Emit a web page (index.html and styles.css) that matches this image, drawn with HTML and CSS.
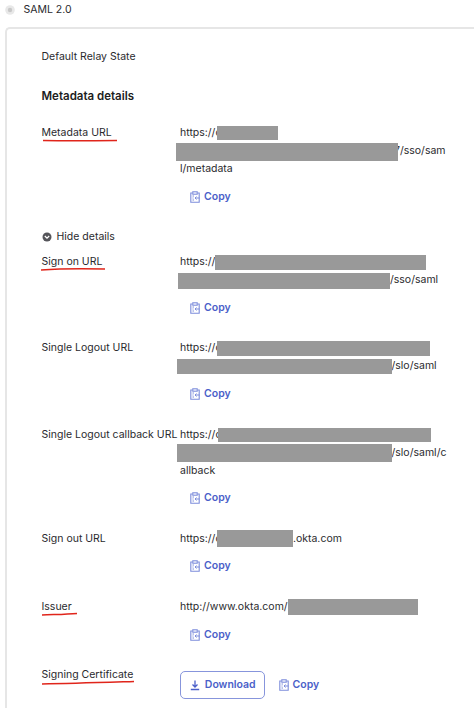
FILE: index.html
```html
<!DOCTYPE html>
<html lang="en">
<head>
<meta charset="utf-8">
<title>SAML 2.0</title>
<link rel="stylesheet" href="styles.css">
</head>
<body>
<svg class="defs" width="0" height="0" aria-hidden="true">
  <symbol id="clip" viewBox="0 0 10 12">
    <path d="M2.500 2H.8v9.200h8.400V2H7.500" fill="none" stroke="currentColor" stroke-width="1.100"/>
    <rect x="2.800" y=".8" width="4.400" height="2.400" fill="none" stroke="currentColor" stroke-width="1.100"/>
    <path d="M2.500 5h1.500M2.500 7h1M2.500 9h1.500M9.500 7H5M6.500 5.500 5 7l1.500 1.500" fill="none" stroke="currentColor" stroke-width="1"/>
  </symbol>
</svg>
<header class="method">
  <svg class="radio" width="10" height="10" viewBox="0 0 10 10"><circle cx="5" cy="5" r="4.800" fill="#e8e8e8"/><circle cx="5" cy="5" r="2.200" fill="#c8c8c8"/></svg>
  <span>SAML 2.0</span>
</header>
<main class="card">
  <p class="relay">Default Relay State</p>
  <h2 class="title">Metadata details</h2>

  <section class="row">
    <div class="label marked">Metadata URL
      <svg class="mark mark-meta" viewBox="0 0 76 4"><path d="M0 2.500 C25 3 50 2.800 75 2.500"/></svg>
    </div>
    <div class="value">
      <div class="line">https://c<span class="bar b-meta1"></span></div>
      <div class="line"><span class="bar b-meta2"></span><span class="peek">7/sso/sam</span></div>
      <div class="line">l/metadata</div>
      <button class="copy"><svg class="ico"><use href="#clip"/></svg>Copy</button>
    </div>
  </section>

  <div class="toggle">
    <svg class="chev" width="10" height="10" viewBox="0 0 10 10"><circle cx="5" cy="5" r="4.500" fill="#55555a"/><path d="M2.800 4 5 6.200 7.200 4" fill="none" stroke="#fff" stroke-width="1.300"/></svg>
    <span>Hide details</span>
  </div>

  <section class="row">
    <div class="label marked">Sign on URL
      <svg class="mark mark-sign" viewBox="0 0 66 4"><path d="M0 3 C20 1.500 45 1.500 65 2"/></svg>
    </div>
    <div class="value">
      <div class="line">https://<span class="bar b-sign1"></span></div>
      <div class="line"><span class="bar b-sign2"></span>/sso/saml</div>
      <button class="copy"><svg class="ico"><use href="#clip"/></svg>Copy</button>
    </div>
  </section>

  <section class="row">
    <div class="label">Single Logout URL</div>
    <div class="value">
      <div class="line">https://c<span class="bar b-slo1"></span></div>
      <div class="line"><span class="bar b-slo2"></span>/slo/saml</div>
      <button class="copy"><svg class="ico"><use href="#clip"/></svg>Copy</button>
    </div>
  </section>

  <section class="row">
    <div class="label">Single Logout callback URL</div>
    <div class="value">
      <div class="line">https://c<span class="bar b-cb1"></span></div>
      <div class="line"><span class="bar b-cb2"></span>/slo/saml/c</div>
      <div class="line">allback</div>
      <button class="copy"><svg class="ico"><use href="#clip"/></svg>Copy</button>
    </div>
  </section>

  <section class="row">
    <div class="label">Sign out URL</div>
    <div class="value">
      <div class="line">https://c<span class="bar b-out"></span>.okta.com</div>
      <button class="copy"><svg class="ico"><use href="#clip"/></svg>Copy</button>
    </div>
  </section>

  <section class="row">
    <div class="label marked">Issuer
      <svg class="mark mark-iss" viewBox="0 0 36 4"><path d="M0 3 C12 2.500 24 2.500 35 1.500"/></svg>
    </div>
    <div class="value">
      <div class="line">http://www.okta.com/<span class="bar b-iss"></span></div>
      <button class="copy"><svg class="ico"><use href="#clip"/></svg>Copy</button>
    </div>
  </section>

  <section class="row">
    <div class="label marked">Signing Certificate
      <svg class="mark mark-cert" viewBox="0 0 93 5"><path d="M0 4 C30 3.500 60 2.500 92 1.500"/></svg>
    </div>
    <div class="value actions">
      <button class="download">
        <svg class="ico-dl" viewBox="0 0 12 12"><path d="M6 1.500V8M3.500 5.500 6 8l2.500-2.500M1.800 10.500h8.400" fill="none" stroke="currentColor" stroke-width="1.300"/></svg>Download
      </button>
      <button class="copy copy-inline"><svg class="ico"><use href="#clip"/></svg>Copy</button>
    </div>
  </section>
</main>
</body>
</html>
```
FILE: styles.css
```css
html, body {
  margin: 0;
  height: 708px;
  overflow: hidden;
  background: #fff;
}
body {
  box-sizing: border-box;
  padding-top: 1px;
  font-family: Inter, "Liberation Sans", sans-serif;
  font-size: 10.500px;
  line-height: 18px;
  color: #2a2a2e;
}
.defs { position: absolute; }

.method {
  display: flex;
  align-items: center;
  gap: 8.500px;
  height: 18px;
  padding-left: 5px;
}
.radio { flex: none; margin-top: -1px; }

.card {
  box-sizing: border-box;
  height: 681px;
  margin: 8px 0 0 5px;
  padding: 19px 0 0 34.500px;
  overflow: hidden;
  border-top: 2px solid #e6e6e6;
  border-left: 2px solid #e6e6e6;
  border-top-left-radius: 5px;
}
.relay { margin: 0; }
.title {
  margin: 20.500px 0 0;
  font-size: 11.500px;
  font-weight: 600;
  color: #1d1d21;
}

.row {
  display: grid;
  grid-template-columns: 138.500px 1fr;
  margin-top: 19.500px;
}
.row + .row { margin-top: 17.800px; }
.toggle + .row { margin-top: 7px; }

.label { position: relative; white-space: nowrap; }
.mark {
  position: absolute;
  left: 0;
  overflow: visible;
  fill: none;
  stroke: #e0251b;
  stroke-width: 1.500;
}
.mark-meta { left: 1px; top: 14px; width: 75px; height: 4px; }
.mark-sign { left: -1px; top: 14px; width: 65px; height: 4px; }
.mark-iss { left: 0; top: 14px; width: 36px; height: 4px; }
.mark-cert { left: 0; top: 14px; width: 93px; height: 5px; }

.line {
  display: flex;
  align-items: center;
  height: 18px;
  white-space: nowrap;
}
.bar {
  flex: none;
  position: relative;
  z-index: 1;
  background: #999;
}
.peek { margin-left: -4px; }
.b-meta1 { width: 61px; height: 14px; margin-left: -4.500px; }
.b-meta2 { width: 222px; height: 18px; margin: 2px 0 0 -4px; }
.b-sign1 { width: 211px; height: 15px; }
.b-sign2 { width: 212px; height: 16px; margin: 2px 0 0 -2px; }
.b-slo1 { width: 213px; height: 15px; margin-left: -4.500px; }
.b-slo2 { width: 215px; height: 15px; margin-left: -3.500px; }
.b-cb1 { width: 213px; height: 14px; margin-left: -3px; }
.b-cb2 { width: 215px; height: 18px; margin: 1px 0 0 -3.500px; }
.b-out { width: 76px; height: 17px; margin-left: -4.500px; }
.b-iss { width: 130px; height: 16px; }

button {
  font: inherit;
  font-weight: 600;
  color: #4b5fc9;
  background: none;
  border: 0;
  padding: 0;
  display: flex;
  align-items: center;
}
.copy {
  height: 28px;
  gap: 4px;
  margin: 4.500px 0 0 10px;
}
.ico { flex: none; width: 10px; height: 12px; color: #7d8ddb; }
.ico-dl { flex: none; width: 12px; height: 12px; }

.toggle {
  display: flex;
  align-items: center;
  gap: 5px;
  margin-top: 17.500px;
}

.actions {
  display: flex;
  align-items: center;
  gap: 14px;
  margin-top: 4.500px;
}
.download {
  width: 84.500px;
  height: 28px;
  justify-content: center;
  gap: 4px;
  border: 1px solid #8795dc;
  border-radius: 5px;
  box-sizing: border-box;
}
.copy-inline { margin: 0; }
```
